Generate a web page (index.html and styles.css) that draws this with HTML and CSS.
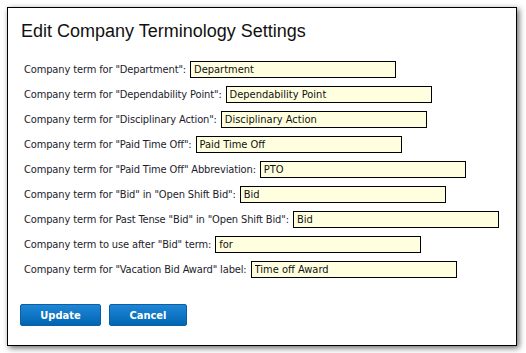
FILE: index.html
```html
<!DOCTYPE html>
<html lang="en">
<head>
    <meta charset="UTF-8">
    <title>Edit Company Terminology Settings</title>
    <link rel="stylesheet" href="styles.css">
</head>
<body>
    <div class="dialog">
        <h1 class="title">Edit Company Terminology Settings</h1>
        <form class="terms">
            <div class="row"><label>Company term for "Department":</label> <input type="text" value="Department"></div>
            <div class="row"><label>Company term for "Dependability Point":</label> <input type="text" value="Dependability Point"></div>
            <div class="row"><label>Company term for "Disciplinary Action":</label> <input type="text" value="Disciplinary Action"></div>
            <div class="row"><label>Company term for "Paid Time Off":</label> <input type="text" value="Paid Time Off"></div>
            <div class="row"><label>Company term for "Paid Time Off" Abbreviation:</label> <input type="text" value="PTO"></div>
            <div class="row"><label>Company term for "Bid" in "Open Shift Bid":</label> <input type="text" value="Bid"></div>
            <div class="row"><label>Company term for Past Tense "Bid" in "Open Shift Bid":</label> <input type="text" value="Bid"></div>
            <div class="row"><label>Company term to use after "Bid" term:</label> <input type="text" value="for"></div>
            <div class="row"><label>Company term for "Vacation Bid Award" label:</label> <input type="text" value="Time off Award"></div>

            <div class="actions">
                <button type="button" class="btn update">Update</button>
                <button type="button" class="btn cancel">Cancel</button>
            </div>
        </form>
    </div>
</body>
</html>
```

FILE: styles.css
```css
body {
    margin: 0;
    padding: 7px;
    background-color: #fff;
    font-family: Tahoma, "DejaVu Sans Condensed", sans-serif;
}

.dialog {
    width: 508px;
    height: 337px;
    border: 1px solid #000;
    background-color: #fff;
    box-shadow: 2px 2px 6px rgba(0, 0, 0, 0.6);
    box-sizing: content-box;
}

.title {
    margin: 12px 0 0 13px;
    font-family: "Liberation Sans", Arial, sans-serif;
    font-size: 18px;
    font-weight: normal;
    color: #111;
    line-height: 22px;
}

.terms {
    margin: 19px 0 0 16px;
}

.row {
    display: flex;
    align-items: center;
    gap: 4px;
    height: 17px;
    margin-bottom: 8px;
    font-size: 11px;
    color: #1c1c2c;
    white-space: nowrap;
}

.row label {
    letter-spacing: -0.13px;
}

.row input {
    width: 206px;
    height: 17px;
    box-sizing: border-box;
    margin: 0;
    padding: 0 3px;
    border: 1px solid #000;
    background-color: #ffffe0;
    font-family: Tahoma, "DejaVu Sans Condensed", sans-serif;
    font-size: 11px;
    color: #111;
}

.actions {
    display: flex;
    gap: 8px;
    margin: 26px 0 0 -4px;
}

.btn {
    height: 22px;
    padding: 0;
    border: 1px solid #0b5fa6;
    border-radius: 2px;
    background: linear-gradient(#1f86d6, #0066b3);
    color: #fff;
    font-family: Tahoma, "DejaVu Sans Condensed", sans-serif;
    font-size: 11px;
    font-weight: bold;
    cursor: pointer;
}

.btn.update {
    width: 81px;
}

.btn.cancel {
    width: 78px;
}
```
